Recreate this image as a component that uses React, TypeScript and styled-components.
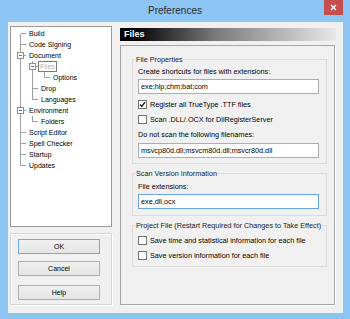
import styled, { createGlobalStyle } from "styled-components";

const GlobalStyle = createGlobalStyle`
  html, body {
    margin: 0;
    padding: 0;
  }
  body {
    width: 350px;
    height: 319px;
    overflow: hidden;
    font-family: "Liberation Sans", Arial, sans-serif;
  }
`;

type TreeNode = {
  label: string;
  level: number;
  expanded?: boolean;
  selected?: boolean;
};

const tree: TreeNode[] = [
  { label: "Build", level: 0 },
  { label: "Code Signing", level: 0 },
  { label: "Document", level: 0, expanded: true },
  { label: "Files", level: 1, expanded: true, selected: true },
  { label: "Options", level: 2 },
  { label: "Drop", level: 1 },
  { label: "Languages", level: 1 },
  { label: "Environment", level: 0, expanded: true },
  { label: "Folders", level: 1 },
  { label: "Script Editor", level: 0 },
  { label: "Spell Checker", level: 0 },
  { label: "Startup", level: 0 },
  { label: "Updates", level: 0 },
];

const hasNextSibling = (i: number) => {
  const level = tree[i].level;
  for (let j = i + 1; j < tree.length; j++) {
    if (tree[j].level < level) return false;
    if (tree[j].level === level) return true;
  }
  return false;
};

const ancestorAt = (i: number, level: number) => {
  for (let k = i - 1; k >= 0; k--) {
    if (tree[k].level === level) return k;
  }
  return 0;
};

const COL = 12;
const ROW = 11;
const MID = 5.5;

function TreeGuides({ index }: { index: number }) {
  const node = tree[index];
  const lines = [];
  for (let l = 0; l < node.level; l++) {
    if (hasNextSibling(ancestorAt(index, l))) {
      const x = l * COL + 6.5;
      lines.push(<line key={"a" + l} x1={x} y1={0} x2={x} y2={ROW} />);
    }
  }
  const x = node.level * COL + 6.5;
  const top = index === 0 ? MID : 0;
  const bottom = hasNextSibling(index) ? ROW : MID;
  return (
    <svg
      width={(node.level + 1) * COL}
      height={ROW}
      shapeRendering="crispEdges"
      style={{ flex: "none" }}
    >
      <g stroke="#a0a0a0" strokeWidth="1">
        {lines}
        <line x1={x} y1={top} x2={x} y2={bottom} />
        <line x1={x} y1={MID} x2={x + 6} y2={MID} />
      </g>
      {node.expanded && (
        <g>
          <rect x={x - 3} y={2.5} width={6} height={6} fill="#fff" stroke="#8f8f8f" />
          <line x1={x - 1.5} y1={MID} x2={x + 1.5} y2={MID} stroke="#4a6ea0" />
        </g>
      )}
    </svg>
  );
}

function Check({ checked }: { checked?: boolean }) {
  return (
    <CheckBox>
      {checked && (
        <svg width="7" height="7" viewBox="0 0 7 7">
          <polyline points="1,3.5 2.8,5.4 6,1.2" fill="none" stroke="#111" strokeWidth="1.3" />
        </svg>
      )}
    </CheckBox>
  );
}

export default function App() {
  return (
    <>
      <GlobalStyle />
      <Window>
        <TitleBar>
          <span />
          <Title>Preferences</Title>
          <CloseButton>
            <svg width="7" height="7" viewBox="0 0 7 7">
              <path d="M1 1 L6 6 M6 1 L1 6" stroke="#fff" strokeWidth="1.4" />
            </svg>
          </CloseButton>
        </TitleBar>
        <Client>
          <LeftColumn>
            <TreeBox>
              {tree.map((node, i) => (
                <TreeRow key={node.label}>
                  <TreeGuides index={i} />
                  <TreeLabel $selected={node.selected}>{node.label}</TreeLabel>
                </TreeRow>
              ))}
            </TreeBox>
            <ButtonGroup>
              <PushButton $default>OK</PushButton>
              <PushButton>Cancel</PushButton>
              <PushButton $extraTop={2}>Help</PushButton>
            </ButtonGroup>
          </LeftColumn>
          <RightColumn>
            <PageHeader>Files</PageHeader>
            <PagePanel>
              <Group $pb={5}>
                <Legend>File Properties</Legend>
                <FieldLabel>Create shortcuts for files with extensions:</FieldLabel>
                <TextField readOnly defaultValue="exe;hlp;chm;bat;com" />
                <CheckRow $top={3}>
                  <Check checked />
                  <span>Register all TrueType .TTF files</span>
                </CheckRow>
                <CheckRow>
                  <Check />
                  <span>Scan .DLL/.OCX for DllRegisterServer</span>
                </CheckRow>
                <FieldLabel $top={3}>Do not scan the following filenames:</FieldLabel>
                <TextField
                  readOnly
                  defaultValue="msvcp80d.dll;msvcm80d.dll;msvcr80d.dll"
                  $top={4}
                />
              </Group>
              <Group $pb={6}>
                <Legend>Scan Version Information</Legend>
                <FieldLabel $top={4}>File extensions:</FieldLabel>
                <TextField readOnly defaultValue="exe,dll,ocx" $focused />
              </Group>
              <Group $pb={3}>
                <Legend>Project File (Restart Required for Changes to Take Effect)</Legend>
                <CheckRow $top={3}>
                  <Check />
                  <span>Save time and statistical information for each file</span>
                </CheckRow>
                <CheckRow>
                  <Check />
                  <span>Save version information for each file</span>
                </CheckRow>
              </Group>
            </PagePanel>
          </RightColumn>
        </Client>
      </Window>
    </>
  );
}

const Window = styled.div`
  width: 350px;
  height: 319px;
  box-sizing: border-box;
  background: #8cc4f4;
  display: flex;
  flex-direction: column;
  padding: 0 7px 6px 8px;
`;

const TitleBar = styled.div`
  height: 22px;
  flex: none;
  display: grid;
  grid-template-columns: 1fr auto 1fr;
  margin: 0 -7px 0 -8px;
`;

const Title = styled.div`
  font-size: 10px;
  line-height: 22px;
  color: #2b2b2b;
`;

const CloseButton = styled.div`
  justify-self: end;
  width: 19px;
  height: 15px;
  margin-right: 7px;
  background: #c74e4e;
  display: flex;
  align-items: center;
  justify-content: center;
`;

const Client = styled.div`
  flex: 1;
  background: #f0f0f0;
  display: flex;
  gap: 8px;
  padding: 4px 0 8px 2px;
  box-sizing: border-box;
  min-height: 0;
`;

const LeftColumn = styled.div`
  width: 102px;
  display: flex;
  flex-direction: column;
  gap: 6px;
`;

const TreeBox = styled.div`
  flex: 1;
  background: #fff;
  border: 1px solid #9a9a9a;
  padding: 1px 0 0 3px;
  font-size: 7px;
  color: #000;
`;

const TreeRow = styled.div`
  height: 11px;
  display: flex;
  align-items: center;
`;

const TreeLabel = styled.span<{ $selected?: boolean }>`
  line-height: 9px;
  padding: 0 1px;
  margin-left: ${(p) => (p.$selected ? "1px" : "2px")};
  border: 1px solid ${(p) => (p.$selected ? "#7a7a7a" : "transparent")};
  color: ${(p) => (p.$selected ? "#b4b4b4" : "#000")};
  white-space: nowrap;
  position: relative;
  left: -1px;
`;

const ButtonGroup = styled.div`
  height: 72px;
  box-sizing: border-box;
  border: 1px solid #d6d6d6;
  box-shadow: inset 1px 1px 0 #fff, 1px 1px 0 #fff;
  padding: 5px 0 0 7px;
  display: flex;
  flex-direction: column;
  gap: 7px;
`;

const PushButton = styled.button<{ $default?: boolean; $extraTop?: number }>`
  width: 82px;
  height: 15px;
  padding: 0;
  margin: ${(p) => p.$extraTop ?? 0}px 0 0 0;
  font-family: "Liberation Sans", Arial, sans-serif;
  font-size: 7px;
  color: #000;
  border: 1px solid ${(p) => (p.$default ? "#6aaae8" : "#adadad")};
  border-radius: 0;
  background: linear-gradient(#f0f0f0, #e5e5e5);
`;

const RightColumn = styled.div`
  width: 216px;
  margin-top: 2px;
  display: flex;
  flex-direction: column;
  gap: 4px;
`;

const PageHeader = styled.div`
  height: 13px;
  line-height: 13px;
  padding-left: 4px;
  font-size: 9px;
  font-weight: bold;
  color: #fff;
  background: linear-gradient(to right, #000 6%, #7c7c7c 45%, #e8e8e8 100%);
`;

const PagePanel = styled.div`
  flex: 1;
  margin-right: 1px;
  border: 1px solid #a5a5a5;
  box-shadow: 1px 1px 0 #fff;
  padding: 9px 7px 0 11px;
  display: flex;
  flex-direction: column;
  gap: 5px;
  font-size: 7.25px;
  color: #000;
`;

const Group = styled.fieldset<{ $pb: number }>`
  margin: 0;
  min-width: 0;
  border: 1px solid #dcdcdc;
  padding: 0 7px ${(p) => p.$pb}px 5px;
  display: flex;
  flex-direction: column;
`;

const Legend = styled.legend`
  font-size: 7.25px;
  line-height: 9px;
  padding: 0 1px;
  margin-left: -3px;
  color: #1a1a1a;
  white-space: nowrap;
`;

const FieldLabel = styled.div<{ $top?: number }>`
  line-height: 9px;
  margin-top: ${(p) => p.$top ?? 3}px;
  white-space: nowrap;
`;

const TextField = styled.input<{ $focused?: boolean; $top?: number }>`
  display: block;
  box-sizing: border-box;
  width: 100%;
  height: 15px;
  margin: ${(p) => p.$top ?? 3}px 0 0 0;
  padding: 0 2px;
  font-family: "Liberation Sans", Arial, sans-serif;
  font-size: 7.25px;
  color: #000;
  background: #fff;
  border: 1px solid ${(p) => (p.$focused ? "#6aa6e6" : "#abadb3")};
  outline: none;
`;

const CheckRow = styled.div<{ $top?: number }>`
  height: 15px;
  margin-top: ${(p) => p.$top ?? 0}px;
  display: flex;
  align-items: center;
  gap: 3px;
  white-space: nowrap;
`;

const CheckBox = styled.span`
  width: 9px;
  height: 9px;
  box-sizing: border-box;
  border: 1px solid #737373;
  background: #fff;
  display: flex;
  align-items: center;
  justify-content: center;
  flex: none;
`;
